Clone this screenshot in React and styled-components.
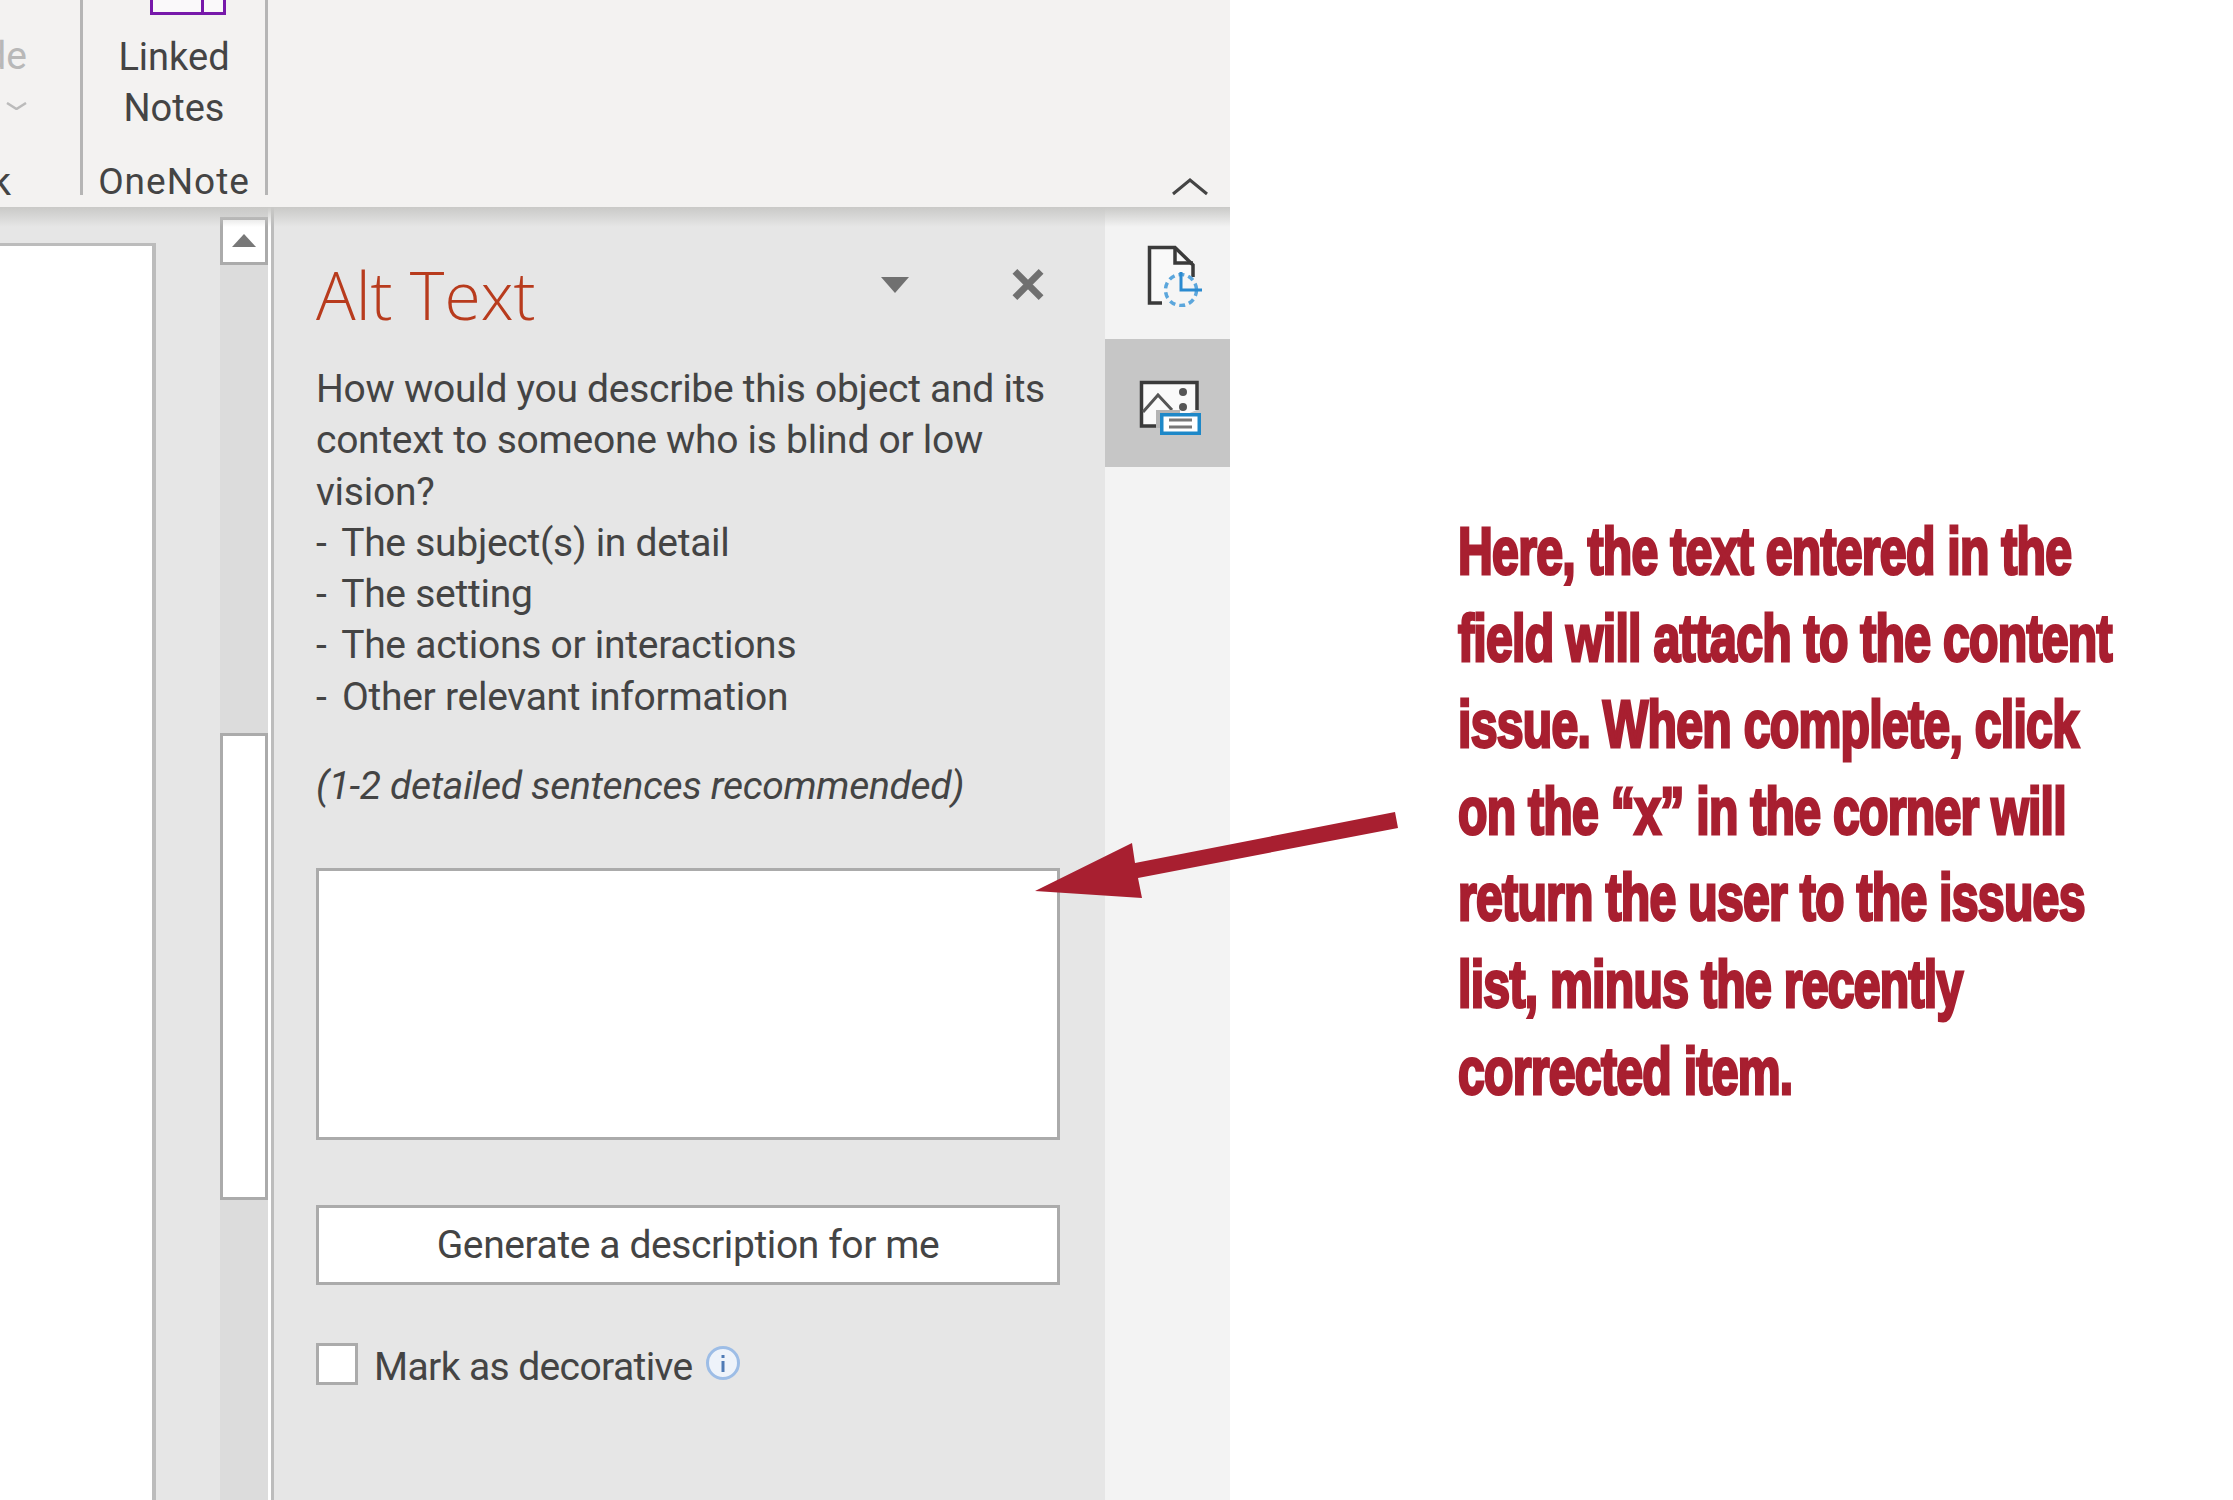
import styled, { createGlobalStyle } from 'styled-components';

const GlobalStyle = createGlobalStyle`
  html, body { margin: 0; padding: 0; background: #fff; }
  #root { width: 2233px; height: 1500px; overflow: hidden; }
`;

const Page = styled.div`
  position: relative;
  display: flex;
  width: 2233px;
  height: 1500px;
  background: #fff;
  overflow: hidden;
`;

const Window = styled.div`
  display: flex;
  flex-direction: column;
  width: 1230px;
  height: 1500px;
  flex: none;
  font-family: Roboto, "Open Sans", sans-serif;
  color: #444;
`;

const Ribbon = styled.div`
  display: flex;
  align-items: flex-start;
  height: 207px;
  flex: none;
  background: #f3f2f1;
  position: relative;
`;

const RibbonCutoff = styled.div`
  width: 80px;
  height: 195px;
  flex: none;
  display: flex;
  flex-direction: column;
  align-items: flex-start;
  overflow: hidden;
  font-size: 39px;
`;

const CutoffText = styled.span`
  display: block;
  flex: none;
  margin-top: ${(p) => p.$top}px;
  margin-left: ${(p) => p.$left}px;
  line-height: 40px;
  color: ${(p) => p.$color};
`;

const CutoffChevron = styled.svg`
  display: block;
  flex: none;
  margin: 26px 0 0 6px;
`;

const RibbonGroup = styled.div`
  width: 182px;
  height: 195px;
  flex: none;
  display: flex;
  flex-direction: column;
  align-items: center;
  border-left: 3px solid #b5b5b5;
  border-right: 3px solid #b5b5b5;
`;

const LinkedIcon = styled.svg`
  display: block;
  align-self: flex-start;
  margin-left: 67px;
  width: 76px;
  height: 15px;
  flex: none;
`;

const GroupLabel = styled.div`
  margin-top: 17px;
  font-size: 38px;
  line-height: 51px;
  text-align: center;
  color: #444;
`;

const GroupName = styled.div`
  font-size: 37px;
  line-height: 40px;
  margin-top: 28px;
  color: #444;
  letter-spacing: 1px;
`;

const CollapseIcon = styled.svg`
  position: absolute;
  right: 22px;
  top: 178px;
  width: 36px;
  height: 18px;
`;

const Workspace = styled.div`
  flex: 1;
  display: flex;
  position: relative;
  min-height: 0;
`;

const TopShadow = styled.div`
  position: absolute;
  left: 0;
  right: 0;
  top: 0;
  height: 20px;
  background: linear-gradient(#c9c9c7, rgba(220, 220, 220, 0));
`;

const DocArea = styled.div`
  width: 220px;
  flex: none;
  background: #e6e6e6;
  padding-top: 36px;
  box-sizing: border-box;
`;

const Sheet = styled.div`
  width: 156px;
  height: 100%;
  box-sizing: border-box;
  background: #fff;
  border-top: 3px solid #bcbcbc;
  border-right: 4px solid #bcbcbc;
`;

const Scrollbar = styled.div`
  width: 48px;
  flex: none;
  background: #dcdcdc;
  padding-top: 10px;
  box-sizing: border-box;
  display: flex;
  flex-direction: column;
`;

const ScrollButton = styled.div`
  width: 48px;
  height: 48px;
  flex: none;
  box-sizing: border-box;
  background: #fff;
  border: 3px solid #ababab;
  display: flex;
  align-items: center;
  justify-content: center;
`;

const ScrollThumb = styled.div`
  width: 48px;
  height: 467px;
  flex: none;
  margin-top: 468px;
  box-sizing: border-box;
  background: #fff;
  border: 3px solid #ababab;
`;

const ScrollGap = styled.div`
  width: 3px;
  flex: none;
  margin-left: 3px;
  background: #bcbcbc;
`;

const Pane = styled.div`
  width: 831px;
  flex: none;
  background: #e6e6e6;
  box-sizing: border-box;
  padding: 52px 45px 0 42px;
  display: flex;
  flex-direction: column;
`;

const PaneHeader = styled.div`
  display: flex;
  align-items: center;
  height: 70px;
`;

const PaneTitle = styled.h1`
  margin: 0;
  flex: 1;
  font-size: 66px;
  line-height: 70px;
  font-weight: 300;
  color: #b83b1d;
  font-family: "Open Sans", sans-serif;
`;

const HeaderIcon = styled.svg`
  display: block;
  flex: none;
  margin-right: ${(p) => p.$gap}px;
  margin-top: -19px;
`;

const Prompt = styled.div`
  margin-top: 35px;
  font-size: 39px;
  line-height: 51.3px;
  letter-spacing: -0.27px;
  color: #444;
  white-space: nowrap;
`;

const Dash = styled.span`
  margin-right: 6px;
`;

const Hint = styled.div`
  margin-top: 38px;
  font-size: 39px;
  line-height: 51px;
  letter-spacing: -0.3px;
  font-style: italic;
  color: #444;
  white-space: nowrap;
`;

const AltField = styled.div`
  margin-top: 56px;
  height: 272px;
  flex: none;
  box-sizing: border-box;
  background: #fff;
  border: 3px solid #ababab;
`;

const GenerateButton = styled.button`
  margin-top: 65px;
  height: 80px;
  flex: none;
  box-sizing: border-box;
  background: #fff;
  border: 3px solid #ababab;
  font-family: inherit;
  font-size: 39px;
  letter-spacing: -0.4px;
  color: #444;
  padding: 0;
`;

const DecorativeRow = styled.div`
  margin-top: 58px;
  display: flex;
  align-items: center;
  height: 42px;
`;

const DecorativeLabel = styled.span`
  margin-top: 5px;
  font-size: 39px;
  letter-spacing: -0.6px;
  color: #444;
`;

const CheckBox = styled.div`
  width: 42px;
  height: 42px;
  flex: none;
  box-sizing: border-box;
  background: #fff;
  border: 3px solid #ababab;
  margin-right: 16px;
`;

const InfoIcon = styled.svg`
  display: block;
  flex: none;
  margin-left: 12px;
  margin-top: -2px;
`;

const Rail = styled.div`
  flex: 1;
  background: #f3f3f3;
  display: flex;
  flex-direction: column;
  padding-top: 20px;
`;

const RailTile = styled.div`
  height: ${(p) => p.$height}px;
  flex: none;
  display: flex;
  justify-content: center;
  align-items: ${(p) => (p.$active ? 'center' : 'flex-start')};
  padding-top: ${(p) => (p.$active ? 10 : 18)}px;
  padding-left: ${(p) => (p.$active ? 6 : 14)}px;
  box-sizing: border-box;
  background: ${(p) => (p.$active ? '#c6c6c6' : 'transparent')};
`;

const Note = styled.div`
  margin-left: 228px;
  margin-top: 508px;
  width: 760px;
  height: 640px;
  flex: none;
  font-family: "Liberation Sans", sans-serif;
  font-weight: 700;
  font-size: 66px;
  line-height: 86.6px;
  letter-spacing: -1px;
  -webkit-text-stroke: 3px #a81f30;
  color: #a81f30;
  white-space: nowrap;
  transform: scaleX(0.73);
  transform-origin: left top;
`;

const Arrow = styled.svg`
  position: absolute;
  left: 1030px;
  top: 805px;
`;

export default function App() {
  return (
    <Page>
      <GlobalStyle />
      <Window>
        <Ribbon>
          <RibbonCutoff>
            <CutoffText $top={36} $left={-53} $color="#b8b8b8">Hide</CutoffText>
            <CutoffChevron width="21" height="8" viewBox="0 0 21 8">
              <path d="M1 1 L10.5 7 L20 1" fill="none" stroke="#bbb" strokeWidth="2.5" />
            </CutoffChevron>
            <CutoffText $top={52} $left={-41} $color="#444">Ink</CutoffText>
          </RibbonCutoff>
          <RibbonGroup>
            <LinkedIcon viewBox="0 0 76 15">
              <rect x="1.5" y="-6" width="73" height="19.5" fill="#faf9fa" stroke="#7719aa" strokeWidth="3" />
              <line x1="52.5" y1="0" x2="52.5" y2="15" stroke="#7719aa" strokeWidth="3" />
            </LinkedIcon>
            <GroupLabel>Linked<br />Notes</GroupLabel>
            <GroupName>OneNote</GroupName>
          </RibbonGroup>
          <CollapseIcon viewBox="0 0 36 18">
            <path d="M1 16 L18 2 L35 16" fill="none" stroke="#444" strokeWidth="3" />
          </CollapseIcon>
        </Ribbon>
        <Workspace>
          <DocArea><Sheet /></DocArea>
          <Scrollbar>
            <ScrollButton>
              <svg width="24" height="14" viewBox="0 0 24 14">
                <path d="M12 0 L24 13 H0 Z" fill="#787878" />
              </svg>
            </ScrollButton>
            <ScrollThumb />
          </Scrollbar>
          <ScrollGap />
          <Pane>
            <PaneHeader>
              <PaneTitle>Alt Text</PaneTitle>
              <HeaderIcon $gap={103} width="28" height="16" viewBox="0 0 28 16">
                <path d="M0 0 H28 L14 16 Z" fill="#707070" />
              </HeaderIcon>
              <HeaderIcon $gap={16} width="32" height="33" viewBox="0 0 33 33">
                <path d="M3 3 L30 30 M30 3 L3 30" stroke="#707070" strokeWidth="7" fill="none" />
              </HeaderIcon>
            </PaneHeader>
            <Prompt>
              How would you describe this object and its<br />
              context to someone who is blind or low<br />
              vision?<br />
              <Dash>-</Dash> The subject(s) in detail<br />
              <Dash>-</Dash> The setting<br />
              <Dash>-</Dash> The actions or interactions<br />
              <Dash>-</Dash> Other relevant information
            </Prompt>
            <Hint>(1-2 detailed sentences recommended)</Hint>
            <AltField />
            <GenerateButton>Generate a description for me</GenerateButton>
            <DecorativeRow>
              <CheckBox />
              <DecorativeLabel>Mark as decorative</DecorativeLabel>
              <InfoIcon width="36" height="36" viewBox="0 0 36 36">
                <circle cx="18" cy="18" r="15.5" fill="#eef3fa" stroke="#9dbde6" strokeWidth="3" />
                <rect x="16.5" y="16" width="3" height="11" fill="#4f7bb5" />
                <rect x="16.5" y="10" width="3" height="3" fill="#4f7bb5" />
              </InfoIcon>
            </DecorativeRow>
          </Pane>
          <Rail>
            <RailTile $height={112}>
              <svg width="56" height="62" viewBox="0 0 56 62">
                <path d="M15 58 H2.5 V2.5 H28 L46 20 V32" fill="#f9f9f9" stroke="#3a3a3a" strokeWidth="3.5" />
                <path d="M28 2.5 V18 H46" fill="none" stroke="#3a3a3a" strokeWidth="3.5" />
                <circle cx="34" cy="45" r="15.5" fill="#f5f5f5" stroke="#5ba6dc" strokeWidth="3.5" strokeDasharray="6 4" />
                <path d="M34 27 V45 H55" fill="none" stroke="#2a8ad0" strokeWidth="3" />
              </svg>
            </RailTile>
            <RailTile $active $height={128}>
              <svg width="63" height="56" viewBox="0 0 63 56">
                <path d="M18 46 H2.5 V2.5 H58 V30" fill="#fafafa" stroke="#3a3a3a" strokeWidth="3.5" />
                <path d="M4 32 L19 15 L33 30" fill="none" stroke="#555" strokeWidth="3" />
                <circle cx="44" cy="12" r="4" fill="#555" />
                <circle cx="44" cy="27" r="4" fill="#555" />
                <rect x="17" y="30" width="24" height="18" fill="#b4b4b4" />
                <rect x="22.75" y="34.75" width="37.5" height="18.5" fill="#fff" stroke="#1e88c8" strokeWidth="3.5" />
                <path d="M30 40 H53 M30 47 H53" stroke="#777" strokeWidth="3" />
              </svg>
            </RailTile>
          </Rail>
          <TopShadow />
        </Workspace>
      </Window>
      <Note>
        Here, the text entered in the<br />
        field will attach to the content<br />
        issue. When complete, click<br />
        on the “x” in the corner will<br />
        return the user to the issues<br />
        list, minus the recently<br />
        corrected item.
      </Note>
      <Arrow width="372" height="100" viewBox="0 0 372 100">
        <path d="M5 86 L102 38 L105 58 L365 7 L368 23 L108 73 L112 93 Z" fill="#a81f30" />
      </Arrow>
    </Page>
  );
}
